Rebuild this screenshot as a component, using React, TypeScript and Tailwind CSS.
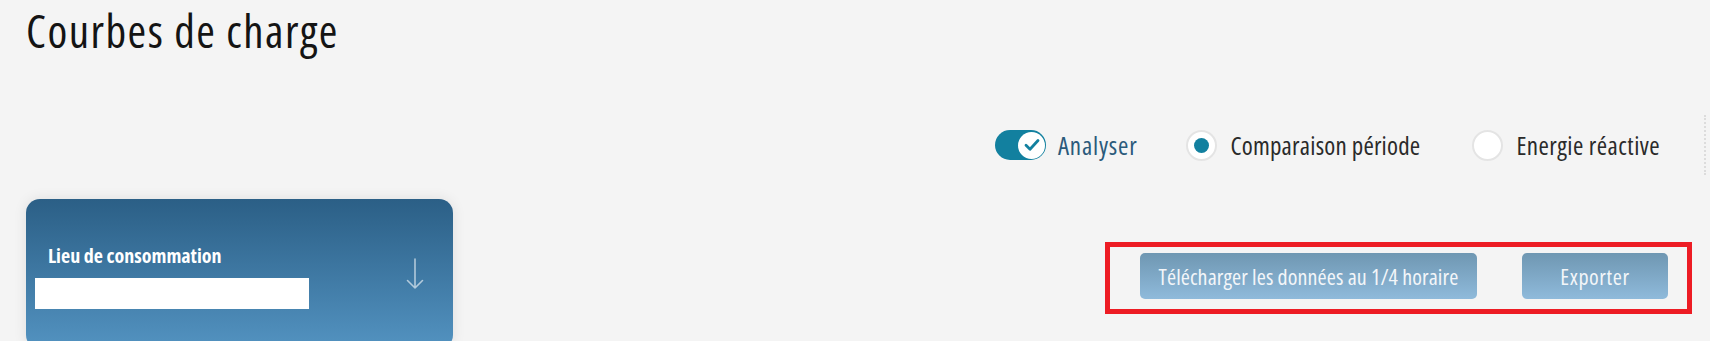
import { useState } from "react"

const font = "font-['Open_Sans','Liberation_Sans',sans-serif] [font-stretch:75%]"

const Radio = ({ checked, label, tracking }: { checked?: boolean; label: string; tracking: string }) => {
    return (
        <div className="flex items-center">
            <div className="w-[31px] h-[31px] rounded-full bg-white border-2 border-[#e4e4e4] flex items-center justify-center flex-shrink-0">
                {checked && <div className="w-[15px] h-[15px] rounded-full bg-[#12809f]" />}
            </div>
            <span className={`ml-[13px] text-[25px] leading-none text-[#2a2a2a] whitespace-nowrap ${tracking}`}>{label}</span>
        </div>
    )
}

const ArrowDown = () => (
    <svg width="18" height="32" viewBox="0 0 18 32" fill="none" className="flex-shrink-0">
        <path d="M9 1 V30 M1.5 22.5 L9 30 L16.5 22.5" stroke="rgba(255,255,255,0.6)" strokeWidth="1.6" strokeLinecap="round" strokeLinejoin="round" />
    </svg>
)

export default function App() {
    const [analyse, setAnalyse] = useState(true)

    return (
        <div className={`w-[1710px] h-[341px] overflow-hidden bg-[#f4f4f4] ${font}`}>
            <h1 className="pl-[26px] pt-[8px] text-[45px] leading-none text-[#141414] font-normal whitespace-nowrap tracking-[1.5px]">Courbes de charge</h1>

            {/* options */}
            <div className="flex items-center h-[60px] mt-[62px] pl-[995px]">
                <button
                    onClick={() => setAnalyse(!analyse)}
                    className="w-[51px] h-[30px] rounded-full bg-[#12809f] flex items-center justify-end pr-[1px] flex-shrink-0"
                    aria-label="Analyser"
                >
                    <div className="w-[27px] h-[27px] rounded-full bg-white flex items-center justify-center">
                        <svg width="18" height="18" viewBox="0 0 18 18" fill="none">
                            <path d="M3 9.3 L7 13.2 L15 4.5" stroke="#12809f" strokeWidth="2.8" strokeLinecap="round" strokeLinejoin="round" />
                        </svg>
                    </div>
                </button>
                <span className="ml-[12px] text-[25px] leading-none text-[#2b5a7b] whitespace-nowrap tracking-[0.8px]">Analyser</span>

                <div className="ml-[49px]">
                    <Radio checked label="Comparaison période" tracking="tracking-[0.2px]" />
                </div>
                <div className="ml-[52px]">
                    <Radio label="Energie réactive" tracking="tracking-[0.45px]" />
                </div>

                <div className="ml-auto mr-[4px] h-[60px] border-l-2 border-dotted border-[#dcdcdc]" />
            </div>

            <div className="flex items-start mt-[24px]">
                {/* site card */}
                <div className="ml-[26px] w-[427px] h-[150px] rounded-[14px] bg-gradient-to-b from-[#2b5f86] to-[#5393c1] shadow-[0_0_14px_rgba(0,0,0,0.09)] flex justify-between pt-[47px] pl-[9px] pr-[29px]">
                    <div>
                        <p className="ml-[13px] text-[20px] leading-none font-bold text-white whitespace-nowrap">Lieu de consommation</p>
                        <div className="mt-[12px] w-[274px] h-[31px] bg-white" />
                    </div>
                    <div className="mt-[12px]">
                        <ArrowDown />
                    </div>
                </div>

                {/* actions */}
                <div className="ml-auto mr-[18px] mt-[43px] w-[587px] h-[72px] border-[5px] border-[#ed1c24] flex items-start pl-[30px] pt-[6px]">
                    <button className="w-[337px] h-[46px] rounded-[5px] bg-gradient-to-b from-[#6f97b2] to-[#8fbadb] text-[22px] leading-none text-[#f3f6f9] whitespace-nowrap tracking-[0.1px]">
                        Télécharger les données au 1/4 horaire
                    </button>
                    <button className="ml-[45px] w-[146px] h-[46px] rounded-[5px] bg-gradient-to-b from-[#6f97b2] to-[#8fbadb] text-[22px] leading-none text-[#f3f6f9] whitespace-nowrap tracking-[0.6px]">
                        Exporter
                    </button>
                </div>
            </div>
        </div>
    )
}
